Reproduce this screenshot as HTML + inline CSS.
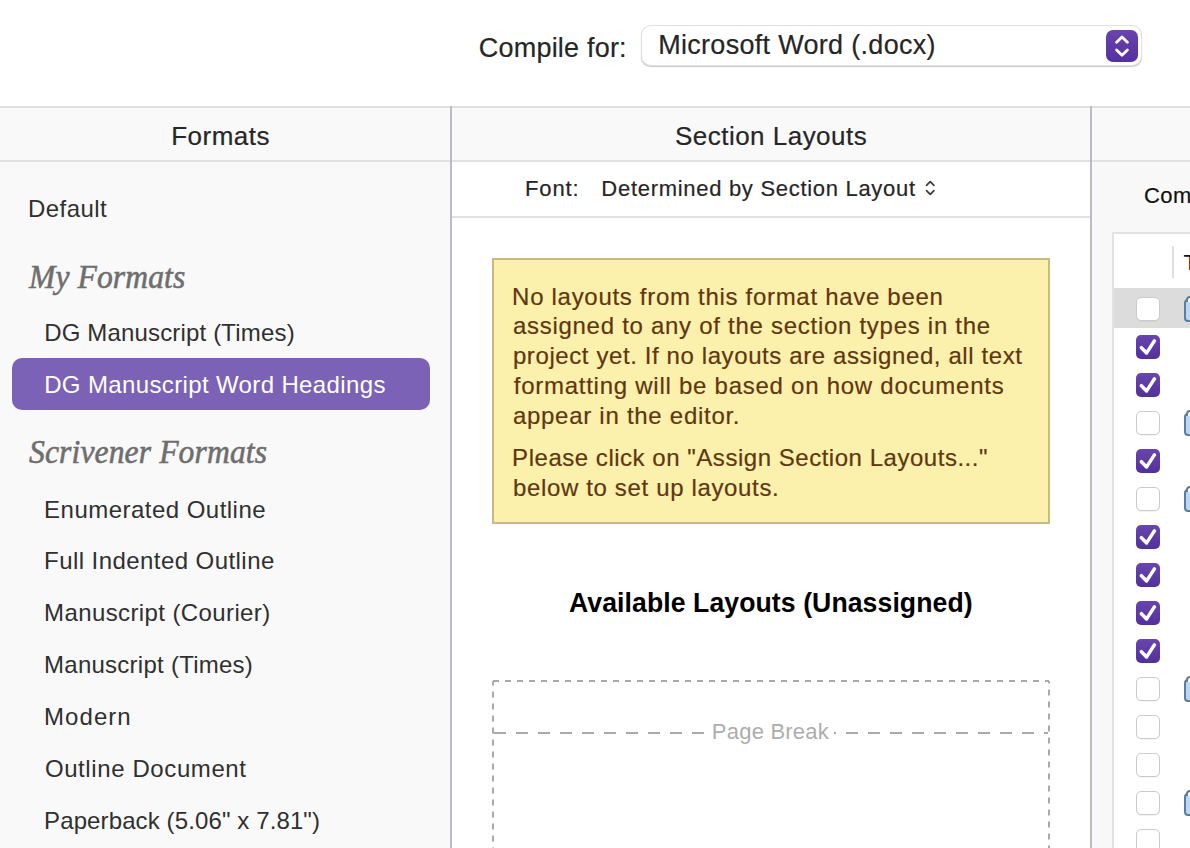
<!DOCTYPE html>
<html><head><meta charset="utf-8">
<style>
html,body{margin:0;padding:0;}
body{width:1190px;height:848px;overflow:hidden;position:relative;background:#fff;font-family:"Liberation Sans",sans-serif;color:#262626;}
.a{position:absolute;}
.t{position:absolute;white-space:nowrap;line-height:1;}
.ser{font-family:"Liberation Serif",serif;font-style:italic;}
.cbu{left:1136px;width:22px;height:22px;border:1px solid #cbcbcb;border-radius:5px;background:#fff;box-shadow:0 0.5px 0.5px rgba(0,0,0,0.08);}
.cbc{left:1136px;width:24px;height:24px;border-radius:5px;background:linear-gradient(#6945ae,#52309c);}
.fold{left:1184px;width:20px;height:22px;}
.fold:before{content:"";position:absolute;left:0;top:3px;width:16px;height:19px;border:2px solid #5f7c98;border-radius:4px;background:#b6d9f7;}
.fold:after{content:"";position:absolute;left:2px;top:0;width:14px;height:4px;border:2px solid #5f7c98;border-bottom:none;border-radius:4px 4px 0 0;background:#fff;}
</style></head>
<body>
<!-- top toolbar -->
<div class="a" style="left:642px;top:26px;width:499px;height:39px;border-radius:9px;background:#fff;box-shadow:0 0 0 1px #e2e2e2, 0 1px 1px 0.5px #c9c9c9;"></div>
<div class="a" style="left:1106px;top:30px;width:32px;height:32px;border-radius:7px;background:linear-gradient(#6944ad,#5530a0);"></div>
<svg class="a" style="left:1106px;top:30px;" width="32" height="32" viewBox="0 0 32 32"><path d="M10.6 12.2 L16 6.9 L21.4 12.2 M10.6 19.9 L16 25.2 L21.4 19.9" fill="none" stroke="#fff" stroke-width="2.8" stroke-linecap="round" stroke-linejoin="round"/></svg>

<!-- table header band -->
<div class="a" style="left:0;top:106px;width:1190px;height:2px;background:#e1e1e1;"></div>
<div class="a" style="left:0;top:108px;width:1190px;height:52px;background:#f9f9f9;"></div>
<div class="a" style="left:0;top:160px;width:1190px;height:2px;background:#e1e1e1;"></div>

<!-- left column -->
<div class="a" style="left:0;top:162px;width:450px;height:686px;background:#f9f9f9;"></div>
<!-- middle column -->
<div class="a" style="left:452px;top:162px;width:638px;height:54px;background:#fff;"></div>
<div class="a" style="left:452px;top:216px;width:638px;height:2px;background:#e1e1e1;"></div>
<!-- right column -->
<div class="a" style="left:1092px;top:162px;width:98px;height:686px;background:#f8f8f8;"></div>

<!-- dividers -->
<div class="a" style="left:450px;top:106px;width:2px;height:742px;background:#b9bdc3;"></div>
<div class="a" style="left:1090px;top:106px;width:2px;height:742px;background:#b9bdc3;"></div>

<!-- headers -->

<!-- font row -->
<svg class="a" style="left:924px;top:179px;" width="12" height="18" viewBox="0 0 12 18"><path d="M2.5 6.3 L6.2 2.6 L9.9 6.3 M2.5 11.7 L6.2 15.4 L9.9 11.7" fill="none" stroke="#3a3a3a" stroke-width="1.7" stroke-linecap="round" stroke-linejoin="round"/></svg>

<!-- left list -->
<div class="a" style="left:12px;top:358px;width:418px;height:52px;border-radius:10px;background:#7b62b6;"></div>

<!-- yellow note -->
<div class="a" style="left:492px;top:258px;width:554px;height:262px;background:#fcf1ac;border:2px solid #c9bb7f;"></div>


<!-- dashed box -->
<svg class="a" style="left:0;top:0;" width="1190" height="848">
  <g fill="none" stroke="#a9a9a9" stroke-width="2">
    <path d="M493 681 H1049" stroke-dasharray="6 6"/>
    <path d="M493 681 V848" stroke-dasharray="6 6" stroke-dashoffset="1.6"/>
    <path d="M1049 681 V848" stroke-dasharray="6 6" stroke-dashoffset="3.6"/>
    <path d="M494 733 H704" stroke-dasharray="12 10"/>
    <path d="M846 733 H1048" stroke-dasharray="12 10"/>
    <path d="M834 733 H836"/>
  </g>
</svg>

<!-- right panel -->
<div class="a" style="left:1112px;top:232px;width:76px;height:614px;background:#fff;border-left:2px solid #e2e2e2;border-top:2px solid #e2e2e2;"></div>
<div class="a" style="left:1172px;top:246px;width:2px;height:32px;background:#e0e0e0;"></div>
<div class="t" style="left:1183.5px;top:251.5px;font-size:22px;color:#111;">T</div>
<div class="a" style="left:1114px;top:288px;width:76px;height:40px;background:#dcdcdc;"></div>
<div class="a cbu" style="top:297px;"></div>
<div class="a fold" style="top:296px;"></div>
<div class="a cbc" style="top:335px;"></div>
<div class="a cbc" style="top:373px;"></div>
<div class="a cbu" style="top:411px;"></div>
<div class="a fold" style="top:410px;"></div>
<div class="a cbc" style="top:449px;"></div>
<div class="a cbu" style="top:487px;"></div>
<div class="a fold" style="top:486px;"></div>
<div class="a cbc" style="top:525px;"></div>
<div class="a cbc" style="top:563px;"></div>
<div class="a cbc" style="top:601px;"></div>
<div class="a cbc" style="top:639px;"></div>
<div class="a cbu" style="top:677px;"></div>
<div class="a fold" style="top:676px;"></div>
<div class="a cbu" style="top:715px;"></div>
<div class="a cbu" style="top:753px;"></div>
<div class="a cbu" style="top:791px;"></div>
<div class="a fold" style="top:790px;"></div>
<div class="a cbu" style="top:829px;"></div>
<svg class="a" style="left:0;top:0;" width="1190" height="848"><path d="M1141.4 347.7 L1146.6 352.9 L1154.4 340.9 M1141.4 385.7 L1146.6 390.9 L1154.4 378.9 M1141.4 461.7 L1146.6 466.9 L1154.4 454.9 M1141.4 537.7 L1146.6 542.9 L1154.4 530.9 M1141.4 575.7 L1146.6 580.9 L1154.4 568.9 M1141.4 613.7 L1146.6 618.9 L1154.4 606.9 M1141.4 651.7 L1146.6 656.9 L1154.4 644.9 " fill="none" stroke="#fff" stroke-width="3.5" stroke-linecap="round" stroke-linejoin="round"/></svg>
<div class="t" id="compile" style="left:478.84px;top:34.86px;font-size:27px;letter-spacing:0.202px;-webkit-text-stroke:0.2px currentColor;">Compile for:</div>
<div class="t" id="popup" style="left:658.18px;top:31.90px;font-size:27px;letter-spacing:0.302px;-webkit-text-stroke:0.2px currentColor;">Microsoft Word (.docx)</div>
<div class="t" id="formats" style="left:171.18px;top:122.93px;font-size:26px;letter-spacing:0.500px;-webkit-text-stroke:0.2px currentColor;">Formats</div>
<div class="t" id="seclay" style="left:674.94px;top:122.99px;font-size:26px;letter-spacing:0.483px;-webkit-text-stroke:0.2px currentColor;">Section Layouts</div>
<div class="t" id="font" style="left:525.12px;top:178.16px;font-size:22px;letter-spacing:0.820px;-webkit-text-stroke:0.2px currentColor;">Font:</div>
<div class="t" id="determ" style="left:601.36px;top:177.84px;font-size:22px;letter-spacing:0.703px;-webkit-text-stroke:0.2px currentColor;">Determined by Section Layout</div>
<div class="t" id="default" style="left:28.08px;top:196.66px;font-size:24px;letter-spacing:0.420px;color:#303030;">Default</div>
<div class="t" id="myformats" style="left:28.76px;top:259.88px;font-size:34px;letter-spacing:0.093px;font-family:'Liberation Serif',serif;font-style:italic;color:#6e6e6e;-webkit-text-stroke:0.6px #6e6e6e;transform:scaleX(0.93);transform-origin:0 0;">My Formats</div>
<div class="t" id="dgtimes" style="left:44.14px;top:320.60px;font-size:24px;letter-spacing:0.168px;color:#303030;">DG Manuscript (Times)</div>
<div class="t" id="dgword" style="left:44.14px;top:372.62px;font-size:24px;letter-spacing:0.368px;color:#fff;">DG Manuscript Word Headings</div>
<div class="t" id="scriv" style="left:28.96px;top:435.44px;font-size:34px;letter-spacing:0.120px;font-family:'Liberation Serif',serif;font-style:italic;color:#6e6e6e;-webkit-text-stroke:0.6px #6e6e6e;transform:scaleX(0.93);transform-origin:0 0;">Scrivener Formats</div>
<div class="t" id="enum" style="left:44.08px;top:497.56px;font-size:24px;letter-spacing:0.472px;color:#303030;">Enumerated Outline</div>
<div class="t" id="full" style="left:44.08px;top:548.68px;font-size:24px;letter-spacing:0.436px;color:#303030;">Full Indented Outline</div>
<div class="t" id="mcour" style="left:44.08px;top:600.68px;font-size:24px;letter-spacing:0.391px;color:#303030;">Manuscript (Courier)</div>
<div class="t" id="mtimes" style="left:44.08px;top:652.68px;font-size:24px;letter-spacing:0.251px;color:#303030;">Manuscript (Times)</div>
<div class="t" id="modern" style="left:44.08px;top:704.68px;font-size:24px;letter-spacing:1.044px;color:#303030;">Modern</div>
<div class="t" id="outline" style="left:44.88px;top:756.68px;font-size:24px;letter-spacing:0.601px;color:#303030;">Outline Document</div>
<div class="t" id="paper" style="left:44.08px;top:808.68px;font-size:24px;letter-spacing:0.113px;color:#303030;">Paperback (5.06" x 7.81")</div>
<div class="t" id="avail" style="left:568.74px;top:589.08px;font-size:28px;letter-spacing:0.092px;font-weight:bold;color:#000;transform:scaleX(0.95);transform-origin:0 0;">Available Layouts (Unassigned)</div>
<div class="t" id="pagebreak" style="left:711.84px;top:721.36px;font-size:22px;letter-spacing:0.219px;color:#adadad;">Page Break</div>
<div class="t" id="yl1" style="left:512.12px;top:284.50px;font-size:24px;letter-spacing:0.700px;color:#603710;-webkit-text-stroke:0.2px currentColor;">No layouts from this format have been</div>
<div class="t" id="yl2" style="left:512.92px;top:313.68px;font-size:24px;letter-spacing:0.721px;color:#603710;-webkit-text-stroke:0.2px currentColor;">assigned to any of the section types in the</div>
<div class="t" id="yl3" style="left:512.92px;top:343.68px;font-size:24px;letter-spacing:0.600px;color:#603710;-webkit-text-stroke:0.2px currentColor;">project yet. If no layouts are assigned, all text</div>
<div class="t" id="yl4" style="left:513.72px;top:373.68px;font-size:24px;letter-spacing:0.742px;color:#603710;-webkit-text-stroke:0.2px currentColor;">formatting will be based on how documents</div>
<div class="t" id="yl5" style="left:512.92px;top:403.68px;font-size:24px;letter-spacing:0.724px;color:#603710;-webkit-text-stroke:0.2px currentColor;">appear in the editor.</div>
<div class="t" id="yl6" style="left:512.12px;top:445.68px;font-size:24px;letter-spacing:0.527px;color:#603710;-webkit-text-stroke:0.2px currentColor;">Please click on "Assign Section Layouts..."</div>
<div class="t" id="yl7" style="left:512.92px;top:475.68px;font-size:24px;letter-spacing:0.653px;color:#603710;-webkit-text-stroke:0.2px currentColor;">below to set up layouts.</div>
<div class="t" id="com" style="left:1143.90px;top:185.34px;font-size:22px;letter-spacing:0.500px;color:#111;-webkit-text-stroke:0.2px currentColor;">Com</div>
</body></html>
